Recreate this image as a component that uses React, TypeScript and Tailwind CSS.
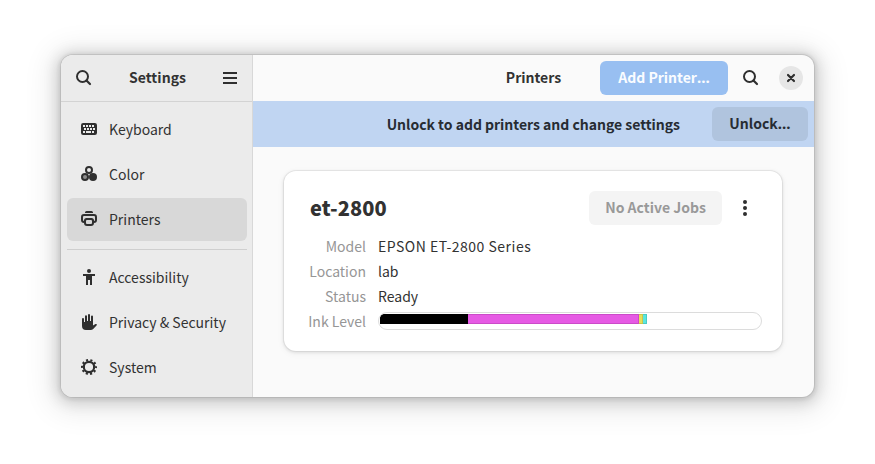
import React from "react";

const ink = "#2f2f2f";

function SearchIcon() {
  return (
    <svg width="16" height="16" viewBox="0 0 16 16" fill="none" stroke={ink} strokeWidth="2">
      <circle cx="6.5" cy="6.5" r="5.5" />
      <path d="M10.500 10.500 14 14" strokeWidth="2.200" strokeLinecap="round" />
    </svg>
  );
}

function KeyboardIcon() {
  return (
    <svg width="16" height="16" viewBox="0 0 16 16">
      <rect x="0" y="2" width="16" height="12" rx="2.2" fill={ink} />
      <path
        fill="#ebebeb"
        d="M2 4h2v2H2zM5 4h2v2H5zM8 4h2v2H8zM11 4h2v2h-2zM3 7h2v2H3zM6 7h2v2H6zM9 7h2v2H9zM12 7h2v2h-2zM2 10h2v2H2zM5 10h5v2H5zM11 10h2v2h-2z"
      />
    </svg>
  );
}

function ColorIcon() {
  return (
    <svg width="16" height="16" viewBox="0 0 16 16">
      <circle cx="8" cy="4" r="3" fill="none" stroke={ink} strokeWidth="2" />
      <circle cx="4" cy="11" r="3" fill="#8d8d8d" stroke={ink} strokeWidth="2" />
      <circle cx="12" cy="11" r="4" fill={ink} />
    </svg>
  );
}

function PrinterIcon() {
  return (
    <svg width="16" height="16" viewBox="0 0 16 16" fill={ink}>
      <path d="M5.500 0h5A1.500 1.500 0 0 1 12 1.500V2H4v-.5A1.500 1.500 0 0 1 5.500 0z" />
      <path d="M3 3h10a3 3 0 0 1 3 3v3a3 3 0 0 1-3 3v-2a1 1 0 0 0 1-1V6a1 1 0 0 0-1-1H3a1 1 0 0 0-1 1v3a1 1 0 0 0 1 1v2a3 3 0 0 1-3-3V6a3 3 0 0 1 3-3z" />
      <path
        fillRule="evenodd"
        d="M5.500 7h5A2.500 2.500 0 0 1 13 9.500V12a3 3 0 0 1-3 3H6a3 3 0 0 1-3-3V9.500A2.500 2.500 0 0 1 5.500 7zM6 9a1 1 0 0 0-1 1v2a1 1 0 0 0 1 1h4a1 1 0 0 0 1-1v-2a1 1 0 0 0-1-1z"
      />
    </svg>
  );
}

function AccessibilityIcon() {
  return (
    <svg width="16" height="16" viewBox="0 0 16 16" fill={ink}>
      <circle cx="8" cy="2" r="2" />
      <path d="M2 5h12v2h-3v9H9v-5H7v5H5V7H2z" />
    </svg>
  );
}

function HandIcon() {
  return (
    <svg width="16" height="16" viewBox="0 0 16 16" fill={ink}>
      <path d="M1 5a1 1 0 0 1 2 0v3h1V2.200a1 1 0 0 1 2 0V7h1V1a1 1 0 0 1 2 0v6h1V2.500a1 1 0 0 1 2 0V11.500l2.500-1.500c1-.4 1.900.5 1.200 1.300L12.500 14.700A4.500 4.500 0 0 1 9.500 16H5a4 4 0 0 1-4-4z" />
    </svg>
  );
}

function GearIcon() {
  return (
    <svg width="16" height="16" viewBox="0 0 16 16" fill="none" stroke={ink}>
      <circle cx="8" cy="8" r="5.200" strokeWidth="2.200" />
      <circle cx="8" cy="8" r="7" strokeWidth="2" strokeDasharray="2.100 2.298" strokeDashoffset="1.050" />
    </svg>
  );
}

function NavRow({ icon, label, selected = false }: { icon: React.ReactNode; label: string; selected?: boolean }) {
  return (
    <li className={`flex h-[43px] items-center gap-3 rounded-md pb-px pl-3.5 ${selected ? "bg-[#d8d8d8]" : ""}`}>
      {icon}
      <span>{label}</span>
    </li>
  );
}

function Dots() {
  return <span className="font-['Noto_Sans',sans-serif] text-[15px]">…</span>;
}

function Detail({ label, children }: { label: string; children: React.ReactNode }) {
  return (
    <div className="flex h-[25px] items-center gap-3">
      <dt className="flex w-14 shrink-0 justify-end whitespace-nowrap text-[#969696]">{label}</dt>
      <dd className="flex-1">{children}</dd>
    </div>
  );
}

export default function App() {
  return (
    <div className="h-[464px] w-[875px] bg-white pl-[61px] pt-[55px] font-['Noto_Sans_CJK_SC',sans-serif] text-sm leading-5 text-[#323232]">
      <div className="flex h-[342px] w-[753px] overflow-hidden rounded-xl bg-[#fafafa] shadow-[0_0_0_1px_rgba(0,0,0,0.08),0_1px_3px_3px_rgba(0,0,0,0.06),0_2px_14px_5px_rgba(0,0,0,0.13),0_4px_28px_12px_rgba(0,0,0,0.08)]">
        <aside className="w-48 shrink-0 border-r border-[#d8d8d8] bg-[#ebebeb]">
          <header className="flex h-[47px] items-center justify-between border-b border-[#d3d3d3] px-[15px]">
            <SearchIcon />
            <h1 className="pb-0.5 font-bold tracking-[0.06px]">Settings</h1>
            <svg width="14" height="12" viewBox="0 0 14 12" fill={ink}>
              <path d="M0 0h14v2H0zM0 5h14v2H0zM0 10h14v2H0z" />
            </svg>
          </header>
          <nav className="pl-1.5 pr-[5px] pt-1.5">
            <ul className="flex flex-col gap-0.5">
              <NavRow icon={<KeyboardIcon />} label="Keyboard" />
              <NavRow icon={<ColorIcon />} label="Color" />
              <NavRow icon={<PrinterIcon />} label="Printers" selected />
            </ul>
            <hr className="mb-1.5 mt-2 border-[#cfcfcf]" />
            <ul className="flex flex-col gap-0.5">
              <NavRow icon={<AccessibilityIcon />} label="Accessibility" />
              <NavRow icon={<HandIcon />} label="Privacy & Security" />
              <NavRow icon={<GearIcon />} label="System" />
            </ul>
          </nav>
        </aside>

        <main className="min-w-0 flex-1">
          <header className="grid h-[46px] grid-cols-[1fr_auto_1fr] items-center pr-[11px]">
            <h2 className="col-start-2 pb-0.5 pl-[11px] font-bold">Printers</h2>
            <div className="flex items-center justify-end">
              <button className="h-[34px] w-32 rounded-md bg-[#98bff1] pb-0.5 font-bold text-[#fafcff]">
                Add Printer<Dots />
              </button>
              <span className="ml-[15px] mr-5">
                <SearchIcon />
              </span>
              <button className="flex size-6 items-center justify-center rounded-full bg-[#e6e6e6]">
                <svg width="10" height="10" viewBox="0 0 10 10" stroke={ink} strokeWidth="2.200" strokeLinecap="round">
                  <path d="m2 2 6 6M8 2 2 8" />
                </svg>
              </button>
            </div>
          </header>
          <div className="flex h-[46px] items-center justify-end bg-[#c0d5f2] pr-1.5 font-bold text-[#272c33]">
            <p className="pb-px tracking-[-0.02px]">Unlock to add printers and change settings</p>
            <button className="ml-8 h-[34px] w-24 rounded-md bg-[#b0c4de] pb-0.5">
              Unlock<Dots />
            </button>
          </div>
          <section className="ml-[31px] mt-6 h-[180px] w-[498px] rounded-xl bg-white px-5 pt-5 shadow-[0_0_0_1px_rgba(0,0,0,0.05),0_1px_3px_1px_rgba(0,0,0,0.08),0_2px_6px_2px_rgba(0,0,0,0.03)]">
            <div className="flex items-center">
              <h3 className="flex-1 pl-1.5 text-[20px] font-black tracking-[0.1px]">et-2800</h3>
              <button className="h-[34px] w-[133px] rounded-md bg-[#f4f4f4] pb-0.5 font-bold text-[#999]">
                No Active Jobs
              </button>
              <svg width="16" height="16" viewBox="0 0 16 16" fill={ink} className="ml-[15px] mr-[9px]">
                <circle cx="8" cy="2" r="2" />
                <circle cx="8" cy="8" r="2" />
                <circle cx="8" cy="14" r="2" />
              </svg>
            </div>
            <dl className="mt-2 pl-1.5">
              <Detail label="Model">
                <span className="tracking-[0.5px]">EPSON ET-2800 Series</span>
              </Detail>
              <Detail label="Location">lab</Detail>
              <Detail label="Status">Ready</Detail>
              <Detail label="Ink Level">
                <div className="h-[18px] w-96 overflow-hidden rounded-full border border-[#dcdcdc] pl-px pt-px">
                  <div className="flex h-2.5 overflow-hidden rounded-tl">
                    <span className="w-[88px] bg-black" />
                    <span className="w-[171px] border border-l-0 border-[#cb4bc8] bg-[#e65ae4]" />
                    <span className="w-1 border border-l-0 border-[#cbc54b] bg-[#e6df5a]" />
                    <span className="w-1 border border-l-0 border-[#4bcbc5] bg-[#5ae6df]" />
                  </div>
                </div>
              </Detail>
            </dl>
          </section>
        </main>
      </div>
    </div>
  );
}
